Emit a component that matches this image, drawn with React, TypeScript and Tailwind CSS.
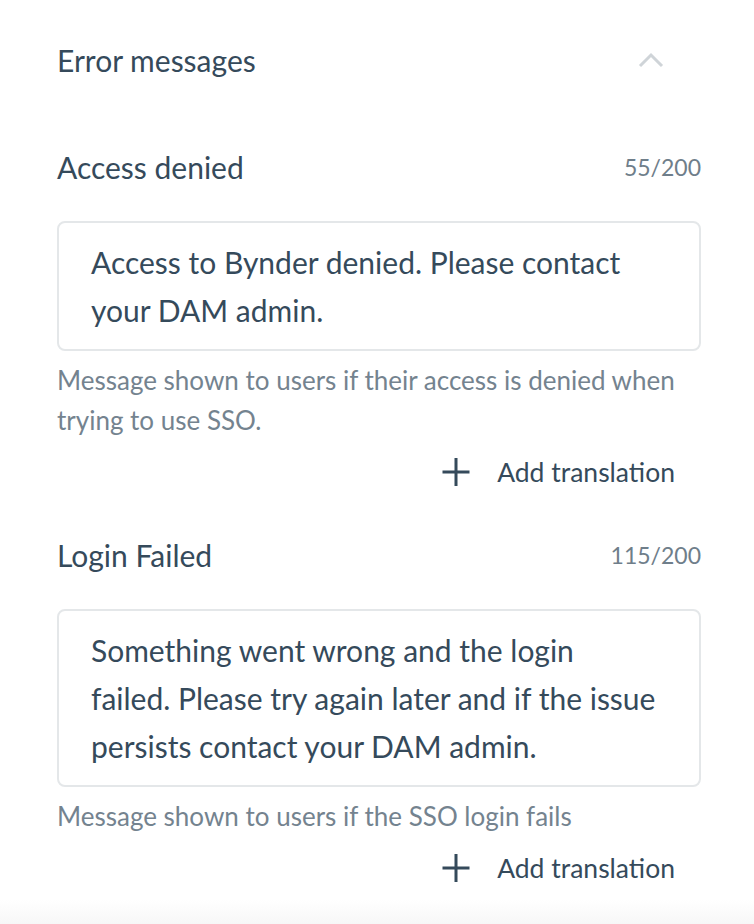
import React from "react";

const font = { fontFamily: "Lato, 'Noto Sans', sans-serif" };

function Plus() {
  return (
    <svg width="28" height="30" viewBox="0 0 28 30" className="shrink-0">
      <path d="M14 1 V29 M0.5 15 H27.5" stroke="#354a5b" strokeWidth="3" fill="none" />
    </svg>
  );
}

function Chevron() {
  return (
    <svg width="26" height="16" viewBox="0 0 26 16">
      <path d="M2 14 L13 3 L24 14" stroke="#cfd4d8" strokeWidth="3" fill="none" />
    </svg>
  );
}

function Field({
  label,
  counter,
  lines,
  helper,
}: {
  label: string;
  counter: string;
  lines: string[];
  helper: string[];
}) {
  return (
    <div className="flex flex-col">
      <div className="flex items-center justify-between h-[40px]">
        <span className="text-[30px] leading-[40px] text-[#354a5b]">{label}</span>
        <span className="text-[23px] leading-[40px] text-[#6f7e8a]">{counter}</span>
      </div>
      <div className="mt-[34px] border-2 border-[#e4e7e9] rounded-[8px] py-[15px] pl-[32px] pr-[20px]">
        {lines.map((l, i) => (
          <div key={i} className="text-[30px] leading-[48px] text-[#354a5b] whitespace-nowrap">
            {l}
          </div>
        ))}
      </div>
      <div className="mt-[9px]">
        {helper.map((h, i) => (
          <div key={i} className="text-[26px] leading-[40px] text-[#74838f] whitespace-nowrap">
            {h}
          </div>
        ))}
      </div>
      <div className="mt-[12px] h-[40px] flex items-center justify-end pr-[26px] gap-[27px]">
        <Plus />
        <span className="text-[26.5px] leading-[40px] text-[#354a5b]">Add translation</span>
      </div>
    </div>
  );
}

export default function App() {
  return (
    <div className="w-[754px] h-[924px] bg-white flex flex-col" style={font}>
      <div className="flex-1 pl-[57px] pr-[53px] flex flex-col">
        <div className="h-[120px] flex items-center justify-between">
          <span className="text-[30px] text-[#354a5b]">Error messages</span>
          <div className="pr-[37px] flex items-center">
            <Chevron />
          </div>
        </div>
        <div className="mt-[27px]">
          <Field
            label="Access denied"
            counter="55/200"
            lines={["Access to Bynder denied. Please contact", "your DAM admin."]}
            helper={["Message shown to users if their access is denied when", "trying to use SSO."]}
          />
        </div>
        <div className="mt-[43px]">
          <Field
            label="Login Failed"
            counter="115/200"
            lines={[
              "Something went wrong and the login",
              "failed. Please try again later and if the issue",
              "persists contact your DAM admin.",
            ]}
            helper={["Message shown to users if the SSO login fails"]}
          />
        </div>
      </div>
      <div className="h-[24px] bg-gradient-to-b from-white to-[#f7f7f7]" />
    </div>
  );
}
